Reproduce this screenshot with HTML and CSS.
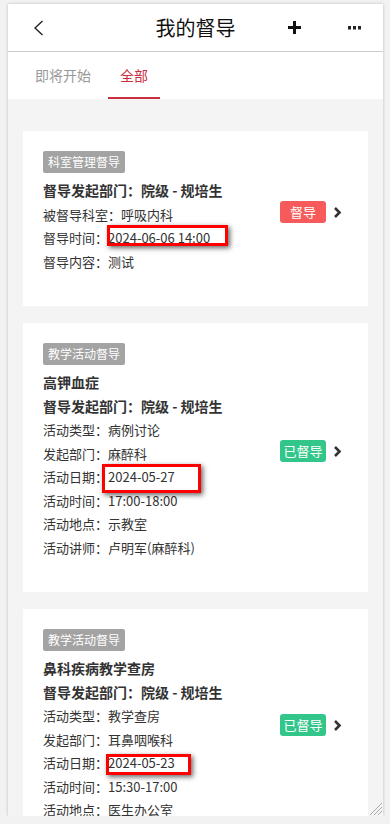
FILE: index.html
```html
<!DOCTYPE html>
<html lang="zh-CN">
<head>
    <meta charset="UTF-8">
    <meta name="viewport" content="width=device-width, initial-scale=1.0">
    <title>我的督导</title>
    <link rel="stylesheet" href="styles.css">
</head>
<body>
    <div class="device">
        <div class="header">
            <div class="header-left">
                <svg class="back-icon" width="11" height="16" viewBox="0 0 11 16">
                    <polyline points="9.5,1 2,8 9.5,15" fill="none" stroke="#222" stroke-width="1.4"/>
                </svg>
            </div>
            <h1 class="title">我的督导</h1>
            <div class="header-right">
                <svg class="plus-icon" width="13" height="13" viewBox="0 0 13 13">
                    <path d="M6.5 0v13M0 6.5h13" stroke="#111" stroke-width="3"/>
                </svg>
                <svg class="more-icon" width="13" height="4" viewBox="0 0 13 4">
                    <rect x="0" y="0" width="3" height="3.5" fill="#222"/>
                    <rect x="5" y="0" width="3" height="3.5" fill="#222"/>
                    <rect x="10" y="0" width="3" height="3.5" fill="#222"/>
                </svg>
            </div>
        </div>

        <div class="tabs">
            <div class="tab">即将开始</div>
            <div class="tab active">全部</div>
        </div>

        <div class="list">
            <!-- 科室管理督导 -->
            <div class="card">
                <div class="info">
                    <div class="tag">科室管理督导</div>
                    <p class="line bold">督导发起部门：院级 - 规培生</p>
                    <p class="line">被督导科室：呼吸内科</p>
                    <p class="line">督导时间：<span class="date">2024-06-06 14:00<span class="hl hl-1"></span></span></p>
                    <p class="line">督导内容：测试</p>
                </div>
                <span class="badge red">督导</span>
                <svg class="arrow" width="9" height="11" viewBox="0 0 9 11">
                    <polyline points="2,1 6.5,5.5 2,10" fill="none" stroke="#333" stroke-width="2.6"/>
                </svg>
            </div>

            <!-- 教学活动督导 -->
            <div class="card">
                <div class="info">
                    <div class="tag">教学活动督导</div>
                    <p class="line bold">高钾血症</p>
                    <p class="line bold">督导发起部门：院级 - 规培生</p>
                    <p class="line">活动类型：病例讨论</p>
                    <p class="line">发起部门：麻醉科</p>
                    <p class="line">活动日期：<span class="date">2024-05-27<span class="hl hl-2"></span></span></p>
                    <p class="line">活动时间：17:00-18:00</p>
                    <p class="line">活动地点：示教室</p>
                    <p class="line">活动讲师：卢明军(麻醉科)</p>
                </div>
                <span class="badge green">已督导</span>
                <svg class="arrow" width="9" height="11" viewBox="0 0 9 11">
                    <polyline points="2,1 6.5,5.5 2,10" fill="none" stroke="#333" stroke-width="2.6"/>
                </svg>
            </div>

            <div class="card">
                <div class="info">
                    <div class="tag">教学活动督导</div>
                    <p class="line bold">鼻科疾病教学查房</p>
                    <p class="line bold">督导发起部门：院级 - 规培生</p>
                    <p class="line">活动类型：教学查房</p>
                    <p class="line">发起部门：耳鼻咽喉科</p>
                    <p class="line">活动日期：<span class="date">2024-05-23<span class="hl hl-3"></span></span></p>
                    <p class="line">活动时间：15:30-17:00</p>
                    <p class="line">活动地点：医生办公室</p>
                </div>
                <span class="badge green">已督导</span>
                <svg class="arrow" width="9" height="11" viewBox="0 0 9 11">
                    <polyline points="2,1 6.5,5.5 2,10" fill="none" stroke="#333" stroke-width="2.6"/>
                </svg>
            </div>
        </div>

        <!-- 右下角拖拽手柄 -->
        <svg class="grip" width="15" height="15" viewBox="0 0 15 15">
            <path d="M15 3L3 15M15 7L7 15M15 11L11 15" stroke="#aaa" stroke-width="1"/>
        </svg>
    </div>
</body>
</html>
```

FILE: styles.css
```css
body {
    margin: 0;
    padding: 0;
    background-color: #f2f2f2;
    font-family: "Noto Sans CJK SC", "Liberation Sans", sans-serif;
    color: #333;
}

.device {
    position: relative;
    display: flex;
    flex-direction: column;
    width: 375px;
    height: 812px;
    margin: 4px 0 0 8px;
    background-color: #f4f4f4;
    box-shadow: 0 0 3px rgba(0, 0, 0, 0.22);
    overflow: hidden;
}

.header {
    display: grid;
    grid-template-columns: 1fr auto 1fr;
    align-items: center;
    height: 47px;
    flex-shrink: 0;
    background-color: #fff;
    border-bottom: 1px solid #ccc;
}

.header-left {
    padding-left: 25px;
    display: flex;
    align-items: center;
}

.title {
    margin: 0;
    font-size: 20px;
    font-weight: normal;
    color: #111;
    line-height: 47px;
}

.header-right {
    display: flex;
    align-items: center;
    justify-content: flex-end;
    padding-right: 22px;
}

.plus-icon {
    margin-right: 47px;
}

.tabs {
    display: flex;
    height: 47px;
    flex-shrink: 0;
    padding-left: 15px;
    background-color: #fff;
}

.tab {
    padding: 0 12px;
    margin-right: 5px;
    font-size: 14px;
    line-height: 47px;
    color: #999;
    box-sizing: border-box;
}

.tab.active {
    color: #c9303e;
    border-bottom: 2px solid #c9303e;
}

.list {
    padding: 32px 15px 0;
}

.card {
    display: flex;
    align-items: center;
    padding: 20px 26px 33px 20px;
    margin-bottom: 17px;
    background-color: #fff;
}

.info {
    flex: 1;
}

.tag {
    width: fit-content;
    height: 22px;
    line-height: 22px;
    padding: 0 5px;
    margin-bottom: 6px;
    font-size: 12px;
    color: #fff;
    background-color: #a3a3a3;
    border-radius: 2px;
}

.line {
    margin: 0;
    font-size: 13px;
    line-height: 23.5px;
    white-space: nowrap;
}

.line.bold {
    font-size: 14px;
    font-weight: bold;
}

.badge {
    width: 46px;
    height: 22px;
    line-height: 22px;
    text-align: center;
    font-size: 13px;
    color: #fff;
    border-radius: 3px;
}

.badge.red {
    background-color: #f65a5a;
}

.badge.green {
    background-color: #33c68a;
}

.arrow {
    margin-left: 7px;
}

/* 截图上的红色标注框 */
.date {
    position: relative;
    display: inline-block;
}

.hl {
    position: absolute;
    border: 3px solid #f00;
    box-sizing: border-box;
    box-shadow: 2px 2px 5px rgba(0, 0, 0, 0.6);
}

.hl-1 {
    left: -1px;
    top: -1px;
    width: 121px;
    height: 21px;
}

.hl-2 {
    left: -6px;
    top: -1px;
    width: 99px;
    height: 29px;
}

.hl-3 {
    left: -2px;
    top: 3px;
    width: 85px;
    height: 21px;
}

.grip {
    position: absolute;
    right: 1px;
    bottom: 1px;
}
```
